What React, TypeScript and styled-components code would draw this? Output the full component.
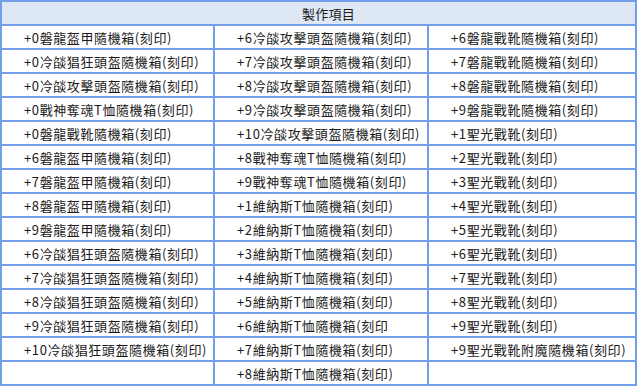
import React from "react";
import styled, { createGlobalStyle } from "styled-components";

const GlobalStyle = createGlobalStyle`
  html, body {
    margin: 0;
    padding: 0;
    background: #ffffff;
  }
  body {
    font-family: "Noto Sans CJK TC", "Noto Sans", sans-serif;
  }
`;

const Table = styled.div`
  display: grid;
  grid-template-columns: 211px 212px 206px;
  grid-auto-rows: 22px;
  gap: 2px;
  padding: 2px;
  width: max-content;
  background: #72a0e8;
`;

const HeaderCell = styled.div`
  grid-column: 1 / span 3;
  display: flex;
  align-items: center;
  justify-content: center;
  padding-left: 20px;
  background: #dee8f5;
  color: #1c1c1c;
  font-size: 13px;
  letter-spacing: 0.3px;
  line-height: 1;
`;

const Cell = styled.div`
  display: flex;
  align-items: center;
  padding-left: 22px;
  background: #ffffff;
  color: #1a1a1a;
  font-size: 13px;
  letter-spacing: 0.6px;
  line-height: 1;
  white-space: nowrap;
`;

const col1 = [
  "+0磐龍盔甲隨機箱(刻印)",
  "+0冷燄猖狂頭盔隨機箱(刻印)",
  "+0冷燄攻擊頭盔隨機箱(刻印)",
  "+0戰神奪魂T恤隨機箱(刻印)",
  "+0磐龍戰靴隨機箱(刻印)",
  "+6磐龍盔甲隨機箱(刻印)",
  "+7磐龍盔甲隨機箱(刻印)",
  "+8磐龍盔甲隨機箱(刻印)",
  "+9磐龍盔甲隨機箱(刻印)",
  "+6冷燄猖狂頭盔隨機箱(刻印)",
  "+7冷燄猖狂頭盔隨機箱(刻印)",
  "+8冷燄猖狂頭盔隨機箱(刻印)",
  "+9冷燄猖狂頭盔隨機箱(刻印)",
  "+10冷燄猖狂頭盔隨機箱(刻印)",
  "",
];

const col2 = [
  "+6冷燄攻擊頭盔隨機箱(刻印)",
  "+7冷燄攻擊頭盔隨機箱(刻印)",
  "+8冷燄攻擊頭盔隨機箱(刻印)",
  "+9冷燄攻擊頭盔隨機箱(刻印)",
  "+10冷燄攻擊頭盔隨機箱(刻印)",
  "+8戰神奪魂T恤隨機箱(刻印)",
  "+9戰神奪魂T恤隨機箱(刻印)",
  "+1維納斯T恤隨機箱(刻印)",
  "+2維納斯T恤隨機箱(刻印)",
  "+3維納斯T恤隨機箱(刻印)",
  "+4維納斯T恤隨機箱(刻印)",
  "+5維納斯T恤隨機箱(刻印)",
  "+6維納斯T恤隨機箱(刻印",
  "+7維納斯T恤隨機箱(刻印)",
  "+8維納斯T恤隨機箱(刻印)",
];

const col3 = [
  "+6磐龍戰靴隨機箱(刻印)",
  "+7磐龍戰靴隨機箱(刻印)",
  "+8磐龍戰靴隨機箱(刻印)",
  "+9磐龍戰靴隨機箱(刻印)",
  "+1聖光戰靴(刻印)",
  "+2聖光戰靴(刻印)",
  "+3聖光戰靴(刻印)",
  "+4聖光戰靴(刻印)",
  "+5聖光戰靴(刻印)",
  "+6聖光戰靴(刻印)",
  "+7聖光戰靴(刻印)",
  "+8聖光戰靴(刻印)",
  "+9聖光戰靴(刻印)",
  "+9聖光戰靴附魔隨機箱(刻印)",
  "",
];

export default function App() {
  return (
    <>
      <GlobalStyle />
      <Table>
        <HeaderCell>製作項目</HeaderCell>
        {col1.map((_, i) => (
          <React.Fragment key={i}>
            <Cell>{col1[i]}</Cell>
            <Cell>{col2[i]}</Cell>
            <Cell>{col3[i]}</Cell>
          </React.Fragment>
        ))}
      </Table>
    </>
  );
}
